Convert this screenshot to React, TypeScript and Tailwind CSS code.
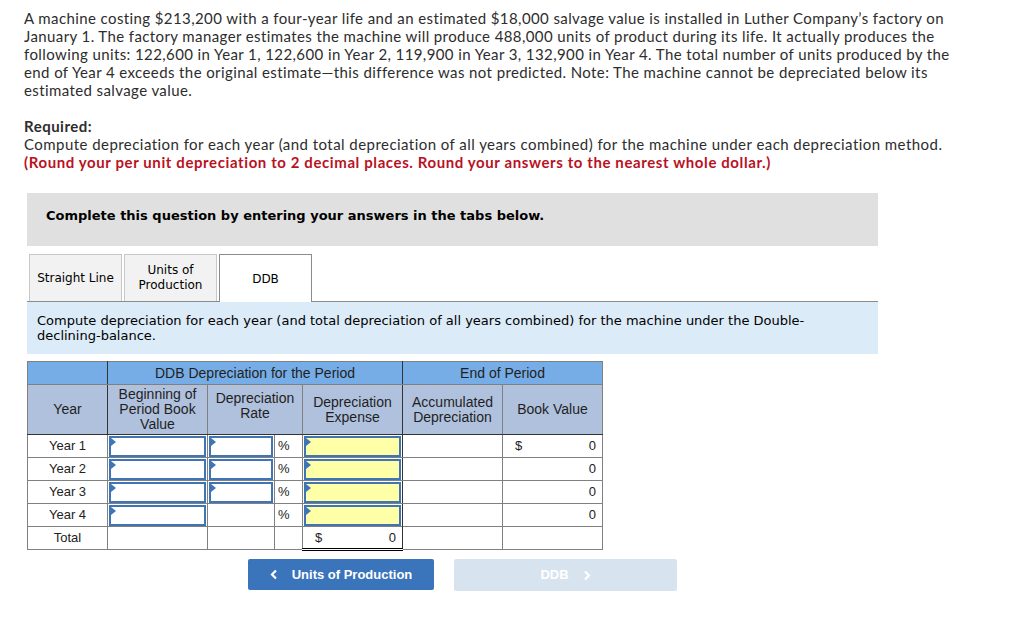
const rows = ["Year 1", "Year 2", "Year 3", "Year 4"];

function Field({ yellow = false }: { yellow?: boolean }) {
  return (
    <div
      className={`relative h-[21px] border-2 border-[#3f75b5] ${yellow ? "bg-[#ffffa8]" : "bg-white"}`}
    >
      <span className="absolute left-0 top-0 w-0 h-0 border-t-[4px] border-b-[4px] border-l-[5px] border-t-transparent border-b-transparent border-l-[#3f75b5]" />
    </div>
  );
}

export default function App() {
  return (
    <div className="w-[1012px] h-[641px] bg-white overflow-hidden text-[#2d2d2d]">
      <div className="pl-[24px] pt-[9px] font-['Lato','Open_Sans',sans-serif] text-[15px] leading-[18px]">
        <p className="whitespace-nowrap tracking-[0.4px]">
          A machine costing $213,200 with a four-year life and an estimated $18,000 salvage value is installed in Luther Company’s factory on
          <br />
          January 1. The factory manager estimates the machine will produce 488,000 units of product during its life. It actually produces the
          <br />
          following units: 122,600 in Year 1, 122,600 in Year 2, 119,900 in Year 3, 132,900 in Year 4. The total number of units produced by the
          <br />
          end of Year 4 exceeds the original estimate—this difference was not predicted. Note: The machine cannot be depreciated below its
          <br />
          estimated salvage value.
        </p>
        <p className="mt-[18px] font-bold tracking-[0.5px]">Required:</p>
        <p className="whitespace-nowrap tracking-[0.45px]">
          Compute depreciation for each year (and total depreciation of all years combined) for the machine under each depreciation method.
        </p>
        <p className="whitespace-nowrap font-bold tracking-[0.6px] text-[#b8121f]">
          (Round your per unit depreciation to 2 decimal places. Round your answers to the nearest whole dollar.)
        </p>
      </div>

      <div className="ml-[27px] w-[851px] mt-[22px] font-['DejaVu_Sans',Verdana,sans-serif]">
        <div className="h-[53px] bg-[#e0e0e0] flex items-center pl-[19px] pb-[8px] text-[13px] font-bold text-black">
          Complete this question by entering your answers in the tabs below.
        </div>

        <div className="mt-[8px] flex items-end gap-[2px] pl-[2px] border-b border-[#8c8c8c] text-[12px] text-black">
          <div className="w-[93px] h-[47px] bg-[#f2f2f2] border border-b-0 border-[#c8c8c8] flex items-center justify-center">
            Straight Line
          </div>
          <div className="w-[93px] h-[47px] bg-[#f2f2f2] border border-b-0 border-[#c8c8c8] flex items-center justify-center text-center leading-[15px]">
            Units of
            <br />
            Production
          </div>
          <div className="w-[93px] h-[48px] bg-white border border-b-0 border-[#8c8c8c] -mb-px flex items-center justify-center">
            DDB
          </div>
        </div>

        <div className="h-[52px] bg-[#dbebf8] pl-[10px] pt-[11px] text-[13px] leading-[15px] text-black">
          Compute depreciation for each year (and total depreciation of all years combined) for the machine under the Double-
          <br />
          declining-balance.
        </div>

        <table className="mt-[7px] border-collapse font-['Liberation_Sans',Arial,sans-serif] text-[13px] leading-[14px] text-[#222]">
          <colgroup>
            <col className="w-[80px]" />
            <col className="w-[100px]" />
            <col className="w-[67px]" />
            <col className="w-[28px]" />
            <col className="w-[100px]" />
            <col className="w-[100px]" />
            <col className="w-[100px]" />
          </colgroup>
          <thead className="text-[14px] leading-[15px] text-[#1f1f1f]">
            <tr className="h-[23px] bg-[#77ade6]">
              <th className="border border-[#808080] border-r-[#333]" />
              <th colSpan={4} className="border border-[#808080] border-r-[#333] font-normal">
                DDB Depreciation for the Period
              </th>
              <th colSpan={2} className="border border-[#808080] font-normal">
                End of Period
              </th>
            </tr>
            <tr className="h-[50px] bg-[#b0c1dd] text-center">
              <th className="border border-[#808080] border-r-[#333] border-b-[#333] font-normal">Year</th>
              <th className="border border-[#808080] border-b-[#333] font-normal">
                Beginning of
                <br />
                Period Book
                <br />
                Value
              </th>
              <th colSpan={2} className="border border-[#808080] border-b-[#333] font-normal pb-[8px]">
                Depreciation
                <br />
                Rate
              </th>
              <th className="border border-[#808080] border-r-[#333] border-b-[#333] font-normal">
                Depreciation
                <br />
                Expense
              </th>
              <th className="border border-[#808080] border-b-[#333] font-normal">
                Accumulated
                <br />
                Depreciation
              </th>
              <th className="border border-[#808080] border-b-[#333] font-normal">Book Value</th>
            </tr>
          </thead>
          <tbody>
            {rows.map((r, i) => (
              <tr key={r} className="h-[23px]">
                <td className="border border-[#808080] text-center">{r}</td>
                <td className="border border-[#808080] p-0 px-px">
                  <Field />
                </td>
                <td className="border border-[#808080] border-r-0 p-0 px-px">{i < 3 && <Field />}</td>
                <td className="border border-[#808080] pl-[3px]">%</td>
                <td className="border border-[#808080] border-r-[#333] p-0 px-px">
                  <Field yellow />
                </td>
                <td className="border border-[#808080]" />
                <td className="border border-[#808080] px-[6px]">
                  <div className="flex justify-between">
                    <span className="pl-[6px]">{i === 0 ? "$" : ""}</span>
                    <span>0</span>
                  </div>
                </td>
              </tr>
            ))}
            <tr className="h-[23px]">
              <td className="border border-[#808080] text-center">Total</td>
              <td className="border border-[#808080]" />
              <td className="border border-[#808080] border-r-0" />
              <td className="border border-[#808080]" />
              <td className="border border-[#808080] border-r-[#333] border-b-[3px] border-b-black border-double px-[6px]">
                <div className="flex justify-between">
                  <span className="pl-[6px]">$</span>
                  <span>0</span>
                </div>
              </td>
              <td className="border border-[#808080]" />
              <td className="border border-[#808080]" />
            </tr>
          </tbody>
        </table>

        <div className="mt-[8px] ml-[221px] flex gap-[20px] font-['Liberation_Sans',Arial,sans-serif] text-[13px] font-bold text-white">
          <button className="w-[186px] h-[31px] rounded-[2px] bg-[#3a74ba] flex items-center justify-center gap-[14px]">
            <svg width="8" height="11" viewBox="0 0 8 11" fill="none">
              <path d="M6 1.5L2 5.5L6 9.5" stroke="white" strokeWidth="2.2" />
            </svg>
            Units of Production
          </button>
          <button className="w-[223px] h-[32px] rounded-[2px] bg-[#d8e3f0] flex items-center justify-center gap-[14px]">
            DDB
            <svg width="8" height="11" viewBox="0 0 8 11" fill="none">
              <path d="M2 1.5L6 5.5L2 9.5" stroke="white" strokeWidth="2.2" />
            </svg>
          </button>
        </div>
      </div>
    </div>
  );
}
